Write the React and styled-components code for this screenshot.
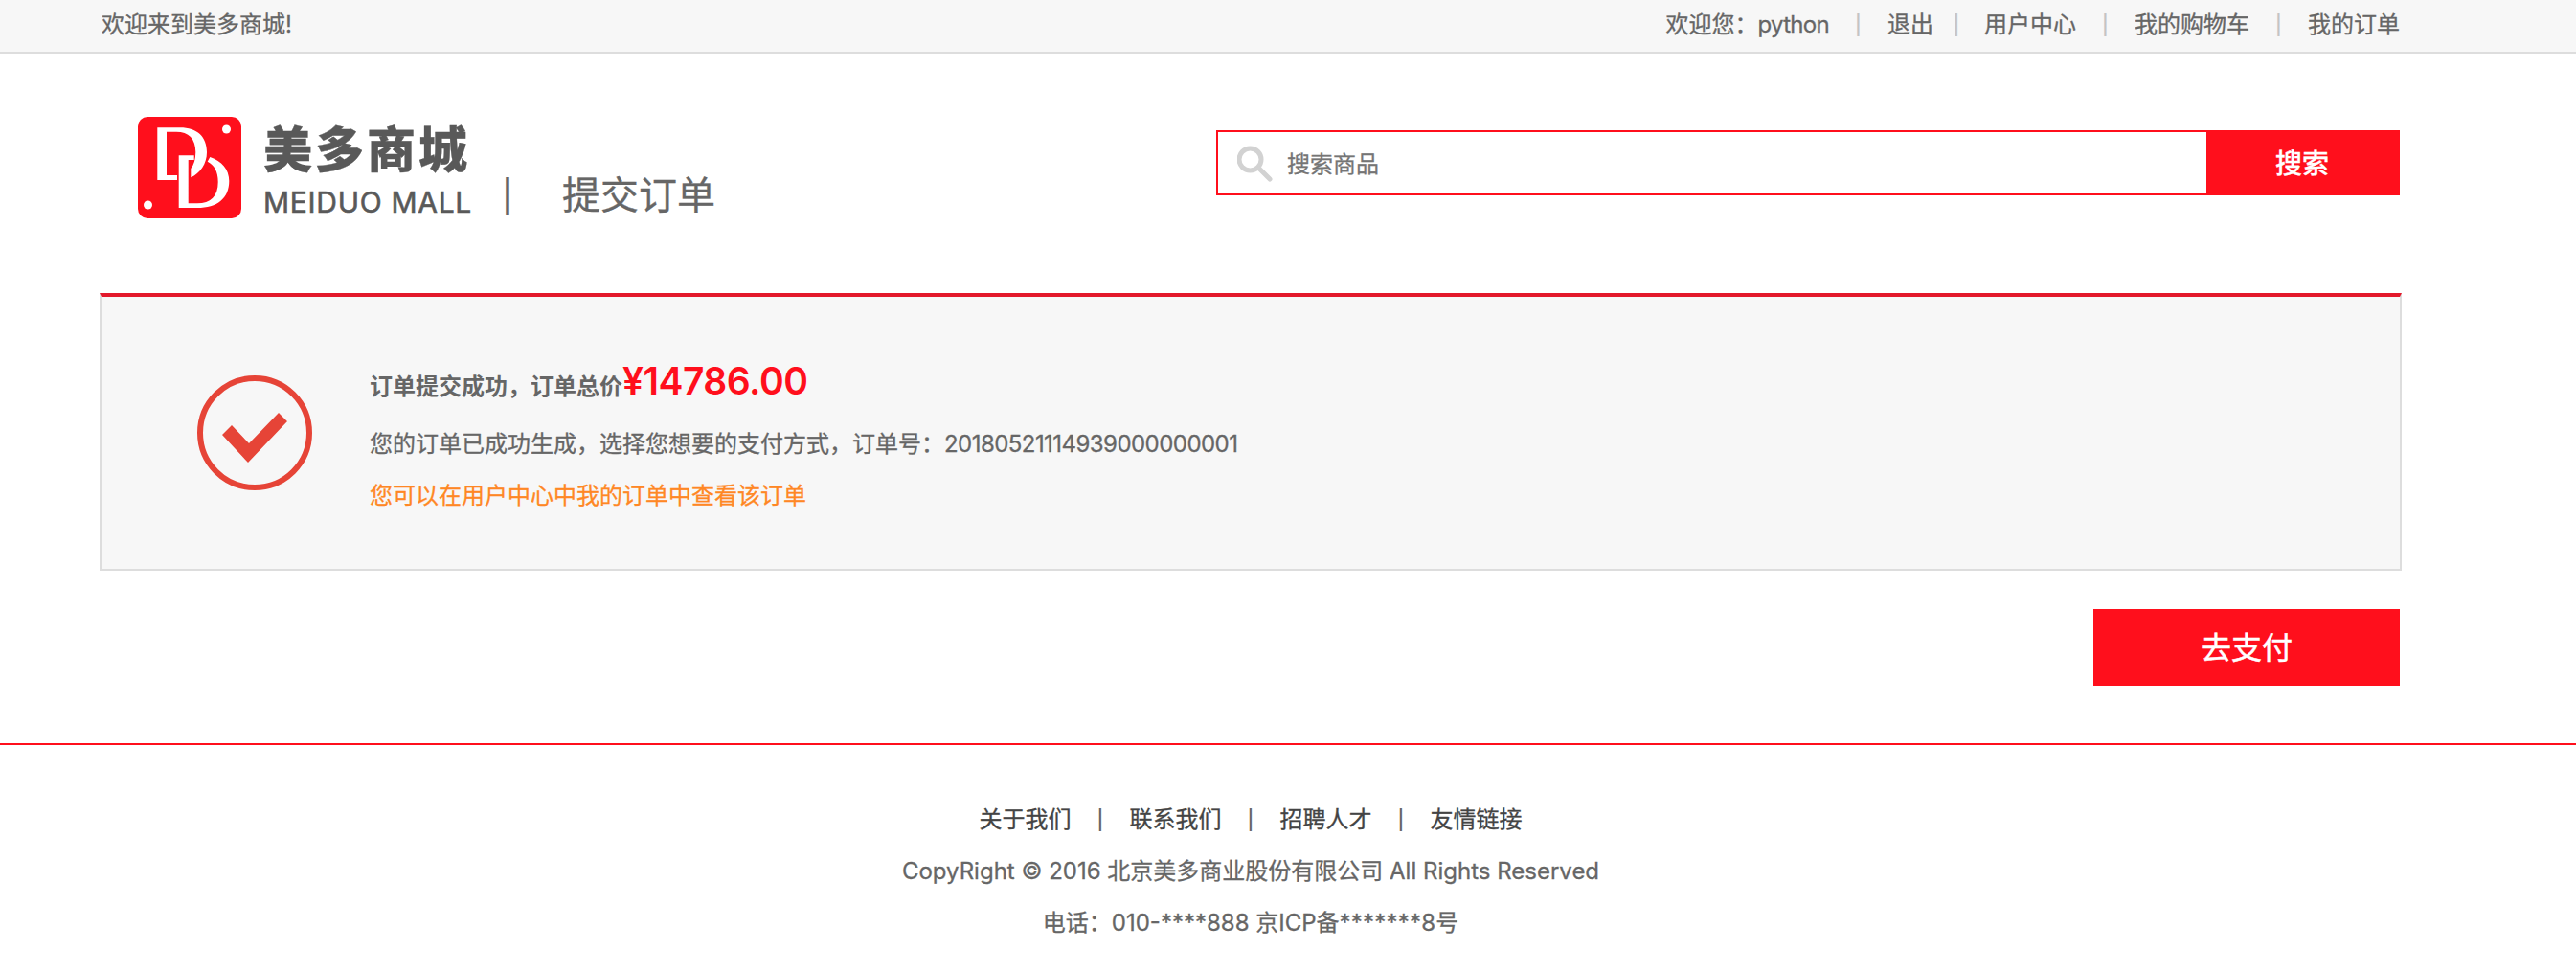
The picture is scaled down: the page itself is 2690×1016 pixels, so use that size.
import React from "react";
import styled, { createGlobalStyle } from "styled-components";

const GlobalStyle = createGlobalStyle`
  * { box-sizing: border-box; }
  body {
    margin: 0;
    background: #fff;
    color: #666;
    font: 24px/54px Inter, "Noto Sans CJK SC", sans-serif;
    -webkit-text-stroke: 0.3px;
  }
`;

const Container = styled.div`
  width: 2400px;
  margin-left: 106px;
`;

const TopBar = styled.header`
  height: 56px;
  background: #f7f7f7;
  border-bottom: 2px solid #ddd;
`;

const TopBarInner = styled(Container)`
  display: flex;
  justify-content: space-between;
  line-height: 52px;
`;

const TopNav = styled.nav`
  display: flex;
`;

const NavLink = styled.a`
  color: ${(p) => p.$color || "#666"};
  white-space: nowrap;
`;

const Latin = styled.span`
  letter-spacing: ${(p) => p.$spacing || 0}px;
`;

const Divider = styled.span`
  width: ${(p) => p.$width}px;
  padding-right: ${(p) => p.$shift || 0}px;
  margin-top: ${(p) => p.$lift || -2}px;
  text-align: center;
  font-family: "Liberation Sans", sans-serif;
  font-size: ${(p) => p.$size || 26}px;
  color: ${(p) => p.$color || "#666"};
  -webkit-text-stroke: 0;
`;

const Header = styled(Container)`
  display: flex;
  height: 250px;
  padding: 66px 0 0 38px;
`;

const LogoMark = styled.svg`
  flex: none;
  width: 108px;
  height: 106px;
`;

const LogoWords = styled.div`
  width: 218px;
  margin-left: 23px;
  color: #595959;
  white-space: nowrap;
`;

const LogoName = styled.div`
  margin-top: 1px;
  font: 900 51px/60px "Noto Sans CJK SC", sans-serif;
  letter-spacing: 3px;
`;

const LogoLatin = styled.div`
  margin-top: 10px;
  font: 400 30px/36px Inter, sans-serif;
  letter-spacing: 0.7px;
  -webkit-text-stroke: 0.6px;
`;

const PageTitle = styled.h1`
  display: flex;
  margin: 52px 0 0 0;
  font-size: 40px;
  font-weight: 400;
  line-height: 60px;
  white-space: nowrap;
`;

const Search = styled.form`
  display: flex;
  width: 1236px;
  height: 68px;
  margin: 14px 0 0 auto;
  border: 2px solid #ff0f1c;
`;

const SearchField = styled.label`
  display: flex;
  flex: 1;
  align-items: center;
  padding-left: 20px;
`;

const SearchIcon = styled.svg`
  width: 38px;
  height: 38px;
  margin: 2px 14px 0 0;
`;

const SearchInput = styled.input`
  flex: 1;
  height: 60px;
  padding: 2px 0 0 0;
  border: 0;
  outline: 0;
  background: transparent;
  font: inherit;
  line-height: 58px;
  &::placeholder { color: #757575; opacity: 1; }
`;

const SearchButton = styled.button`
  width: 200px;
  padding: 0 0 2px;
  border: 0;
  background: #ff0f1c;
  color: #fff;
  font: 500 28px/60px "Noto Sans CJK SC", sans-serif;
  -webkit-text-stroke: 0.3px;
`;

const ResultPanel = styled.section`
  display: flex;
  width: 2404px;
  height: 290px;
  margin-left: 104px;
  padding-left: 100px;
  background: #f7f7f7;
  border: 2px solid #ddd;
  border-top: 4px solid #e3182b;
`;

const ResultIcon = styled.svg`
  width: 120px;
  height: 120px;
  margin-top: 82px;
`;

const ResultText = styled.div`
  margin: 58px 0 0 60px;
  white-space: nowrap;
`;

const ResultHeadline = styled.h2`
  display: flex;
  align-items: baseline;
  height: 69px;
  margin: 0;
  font-size: 24px;
  font-weight: 700;
  line-height: 60px;
  -webkit-text-stroke: 0;
`;

const Total = styled.em`
  color: #ff0f1c;
  font-size: 39px;
  font-style: normal;
  font-weight: 600;
  letter-spacing: ${(p) => p.$spacing}px;
`;

const ResultLine = styled.p`
  margin: 0;
  line-height: 54px;
  color: ${(p) => (p.$highlight ? "#ff8724" : "#666")};
`;

const Actions = styled(Container)`
  display: flex;
  justify-content: flex-end;
  margin-top: 40px;
`;

const PayButton = styled.button`
  width: 320px;
  height: 80px;
  padding: 0 0 3px;
  border: 0;
  background: #ff0f1c;
  color: #fff;
  font: 400 32px/77px "Noto Sans CJK SC", sans-serif;
  -webkit-text-stroke: 0.5px;
`;

const Footer = styled.footer`
  margin-top: 60px;
  padding-top: 51px;
  border-top: 2px solid #ff0f1c;
`;

const FooterInner = styled(Container)`
  display: flex;
  flex-direction: column;
  align-items: center;
`;

const FooterLinks = styled.nav`
  display: flex;
`;

const FooterText = styled.p`
  margin: 0;
  white-space: nowrap;
`;

export default function App() {
  return (
    <>
      <GlobalStyle />
      <TopBar>
        <TopBarInner>
          <span>欢迎来到美多商城!</span>
          <TopNav>
            <span>欢迎您：<Latin $spacing={-0.7}>python</Latin></span>
            <Divider $width={61} $color="#c4c4c4">|</Divider>
            <NavLink>退出</NavLink>
            <Divider $width={53} $shift={5} $color="#c4c4c4">|</Divider>
            <NavLink>用户中心</NavLink>
            <Divider $width={61} $color="#c4c4c4">|</Divider>
            <NavLink>我的购物车</NavLink>
            <Divider $width={61} $color="#c4c4c4">|</Divider>
            <NavLink>我的订单</NavLink>
          </TopNav>
        </TopBarInner>
      </TopBar>

      <Header>
        <LogoMark viewBox="0 0 108 106">
          <rect width="108" height="106" rx="10" fill="#ff0f1c" />
          <circle cx="92.500" cy="13" r="4.500" fill="#fff" />
          <circle cx="10.500" cy="92" r="4.500" fill="#fff" />
          <g fill="#fff">
            <path d="M20.300 11.300H44C62 11.300 72 21 72 37C72 49 65 59 55.300 63.300V54C58.500 50 60.300 44 60.300 37C60.300 23 53 15.800 40 15.800H30V61H41V66H20.300Z" />
            <path d="M42.700 40.300H58.700V45H52.700V90.300H62C76 90.300 83.700 83 83.700 68C83.700 57 79.500 50 72.700 46.700L75.300 42C87.500 46 95.300 55 95.300 67C95.300 85 83 95 62 95H42.700Z" />
          </g>
        </LogoMark>
        <LogoWords>
          <LogoName>美多商城</LogoName>
          <LogoLatin>MEIDUO MALL</LogoLatin>
        </LogoWords>
        <PageTitle>
          <Divider $width={94} $shift={20} $size={42}>|</Divider>
          <span>提交订单</span>
        </PageTitle>
        <Search>
          <SearchField>
            <SearchIcon viewBox="0 0 38 38" fill="none" stroke="#d2d2d2">
              <circle cx="13.500" cy="14.500" r="11.500" strokeWidth="5" />
              <path d="M23 24L34 35" strokeWidth="5" strokeLinecap="round" />
            </SearchIcon>
            <SearchInput placeholder="搜索商品" />
          </SearchField>
          <SearchButton type="button">搜索</SearchButton>
        </Search>
      </Header>

      <ResultPanel>
        <ResultIcon viewBox="0 0 120 120">
          <circle cx="60" cy="60" r="57" fill="none" stroke="#e64437" strokeWidth="6" />
          <path d="M26 62L36 52L54 71L85 39L94 48L53 91Z" fill="#e64437" />
        </ResultIcon>
        <ResultText>
          <ResultHeadline>
            <span>订单提交成功，订单总价</span>
            <Total $spacing={-0.5}>¥14786.00</Total>
          </ResultHeadline>
          <ResultLine>
            您的订单已成功生成，选择您想要的支付方式，订单号：
            <Latin $spacing={-0.55}>20180521114939000000001</Latin>
          </ResultLine>
          <ResultLine $highlight>您可以在用户中心中我的订单中查看该订单</ResultLine>
        </ResultText>
      </ResultPanel>

      <Actions>
        <PayButton type="button">去支付</PayButton>
      </Actions>

      <Footer>
        <FooterInner>
          <FooterLinks>
            <NavLink $color="#444">关于我们</NavLink>
            <Divider $width={61}>|</Divider>
            <NavLink $color="#444">联系我们</NavLink>
            <Divider $width={61}>|</Divider>
            <NavLink $color="#444">招聘人才</NavLink>
            <Divider $width={61}>|</Divider>
            <NavLink $color="#444">友情链接</NavLink>
          </FooterLinks>
          <FooterText>
            <Latin>CopyRight © 2016 </Latin>
            北京美多商业股份有限公司
            <Latin> All Rights Reserved</Latin>
          </FooterText>
          <FooterText>
            电话：<Latin>010-****888</Latin> 京<Latin>ICP</Latin>备<Latin $spacing={0.2}>*******8</Latin>号
          </FooterText>
        </FooterInner>
      </Footer>
    </>
  );
}
